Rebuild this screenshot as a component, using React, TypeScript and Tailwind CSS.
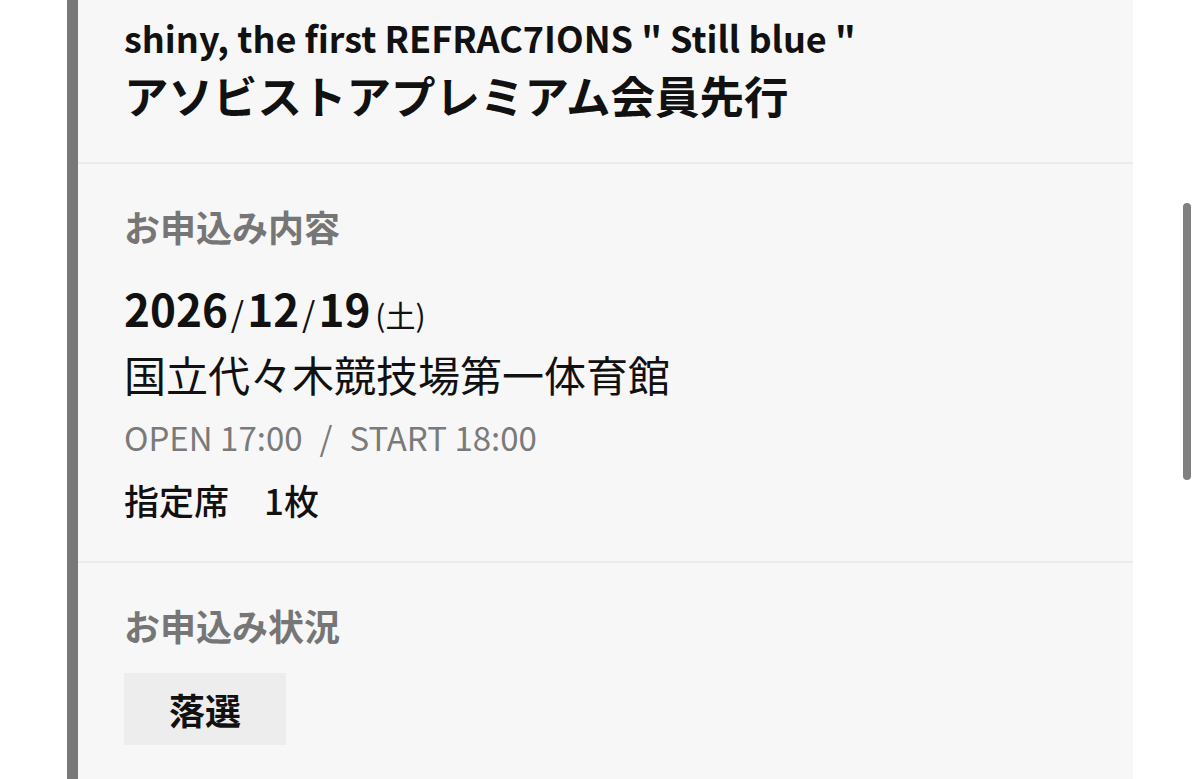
import React from 'react';

const entry = {
  tourTitle: 'shiny, the first REFRAC7IONS " Still blue "',
  saleName: 'アソビストアプレミアム会員先行',
  year: '2026',
  month: '12',
  day: '19',
  weekday: '土',
  venue: '国立代々木競技場第一体育館',
  open: '17:00',
  start: '18:00',
  seat: '指定席',
  count: '1枚',
  result: '落選',
};

const font = "font-['Noto_Sans_CJK_JP','Noto_Sans',sans-serif]";

const SectionLabel = ({ children }: { children: React.ReactNode }) => (
  <h3 className="text-[36px] leading-[48px] font-bold text-[#767676]">{children}</h3>
);

const App = () => {
  return (
    <div className={`relative min-h-[779px] bg-white overflow-hidden ${font}`}>
      <div className="ml-[67px] w-[1066px] min-h-[779px] border-l-[11px] border-[#787878] bg-[#f7f7f7]">
        {/* event heading */}
        <div className="pl-[46px] pt-[13px] pb-[33px] border-b-2 border-[#ebebeb]">
          <h2 className="text-[36px] leading-[48px] font-bold text-[#111] whitespace-pre">
            {entry.tourTitle}
          </h2>
          <h1 className="text-[44.5px] leading-[68px] font-bold text-[#111]">{entry.saleName}</h1>
        </div>

        {/* application details */}
        <div className="pl-[46px] pt-[38px] pb-[37px] border-b-2 border-[#ebebeb]">
          <SectionLabel>お申込み内容</SectionLabel>
          <div className="mt-[30px] text-[44px] leading-[56px] font-bold text-[#111]">
            <span className="leading-none">{entry.year}</span>
            <span className="leading-none font-normal text-[34px] mx-[3px]">/</span>
            <span className="leading-none">{entry.month}</span>
            <span className="leading-none font-normal text-[34px] mx-[3px]">/</span>
            <span className="leading-none">{entry.day}</span>
            <span className="leading-none font-normal text-[30px] ml-[5px]">({entry.weekday})</span>
          </div>
          <p className="mt-[10px] text-[42px] leading-[56px] text-[#111]">{entry.venue}</p>
          <p className="mt-[13px] flex text-[33px] leading-[44px] text-[#7a7a7a]">
            <span>OPEN {entry.open}</span>
            <span className="mx-[17px]">/</span>
            <span>START {entry.start}</span>
          </p>
          <p className="mt-[17px] text-[35px] leading-[48px] font-medium text-[#111]">
            {entry.seat}　{entry.count}
          </p>
        </div>

        {/* application status */}
        <div className="pl-[46px] pt-[38px] pb-[40px]">
          <SectionLabel>お申込み状況</SectionLabel>
          <div className="mt-[24px] w-[162px] h-[72px] flex items-center justify-center bg-[#ededed]">
            <span className="text-[36px] leading-none font-bold text-[#111]">{entry.result}</span>
          </div>
        </div>
      </div>

      {/* scroll thumb */}
      <div className="absolute left-[1183px] top-[203px] w-[8px] h-[277px] rounded-full bg-[#808080]" />
    </div>
  );
};

export default App;
